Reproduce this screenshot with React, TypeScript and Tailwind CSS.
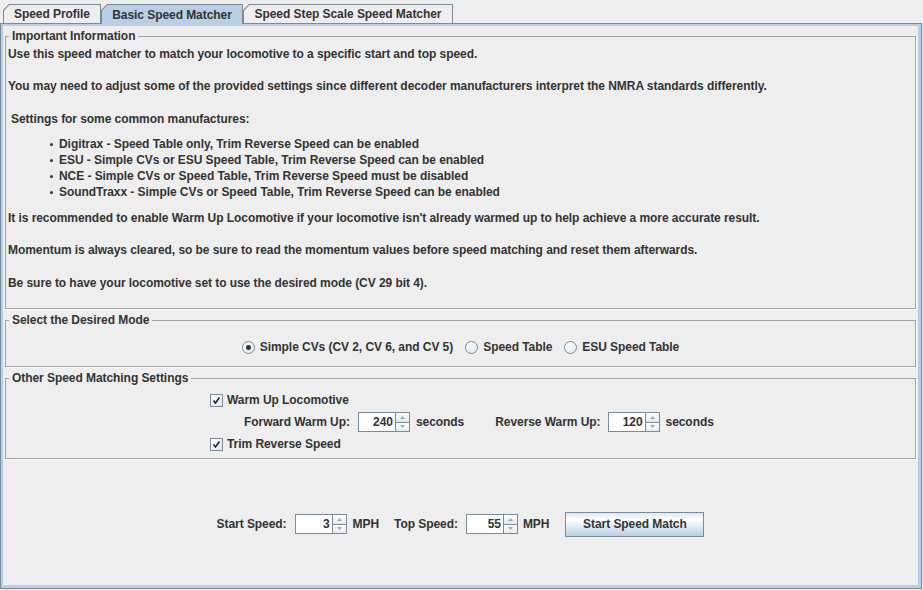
import React from 'react';

const font = "font-['Liberation_Sans',Arial,sans-serif]";

interface TabProps {
  label: string;
  width: string;
  selected?: boolean;
}

const Tab: React.FC<TabProps> = ({ label, width, selected }) => (
  <div
    className={`${width} ${
      selected ? 'h-[20px] -mb-px relative z-10' : 'h-[19px]'
    } bg-[#7a8a99] pt-px px-px [clip-path:polygon(6px_0,100%_0,100%_100%,0_100%,0_6px)]`}
  >
    <div
      className={`h-full ${
        selected ? 'bg-[#b8cfe5]' : 'bg-[#eeeeee]'
      } flex items-center justify-center leading-[14px] [clip-path:polygon(5.5px_0,100%_0,100%_100%,0_100%,0_5.5px)]`}
    >
      {label}
    </div>
  </div>
);

const TitledPanel: React.FC<{ title: string; className?: string; children?: React.ReactNode }> = ({
  title,
  className = '',
  children,
}) => (
  <fieldset
    className={`mx-[2px] border border-[#a3a3a3] shadow-[1px_1px_0_#ffffff] ${className}`}
  >
    <legend className="ml-[3px] px-[3px] leading-[14px]">{title}</legend>
    {children}
  </fieldset>
);

const Arrow: React.FC<{ up?: boolean }> = ({ up }) => (
  <svg width="5" height="3" viewBox="0 0 5 3" className="block">
    {up ? (
      <path d="M2.5 0 L5 3 L0 3 Z" fill="#a0a8b0" />
    ) : (
      <path d="M0 0 L5 0 L2.5 3 Z" fill="#a0a8b0" />
    )}
  </svg>
);

const Spinner: React.FC<{ value: string }> = ({ value }) => (
  <div className="flex h-[20px] shrink-0">
    <div className="w-[37px] h-full border border-r-0 border-[#7a8a99] bg-white text-right pr-[2px] leading-[18px] shadow-[inset_0_-1px_0_#ffffff]">
      {value}
    </div>
    <div className="w-[15px] h-full flex flex-col border border-[#7a8a99] bg-[#eeeeee]">
      <div className="flex-1 flex items-center justify-center border-b border-[#7a8a99] bg-[linear-gradient(#ffffff,#e4e8ec)]">
        <Arrow up />
      </div>
      <div className="flex-1 flex items-center justify-center bg-[linear-gradient(#ffffff,#e4e8ec)]">
        <Arrow />
      </div>
    </div>
  </div>
);

const CheckBox: React.FC<{ label: string }> = ({ label }) => (
  <div className="flex items-center h-[16px]">
    <div className="w-[13px] h-[13px] border border-[#7a8a99] bg-[linear-gradient(135deg,#ffffff,#dde8f3)] flex items-center justify-center">
      <svg width="9" height="9" viewBox="0 0 9 9">
        <path d="M1.5 4.5 L3.5 7 L7.5 1.5" stroke="#222" strokeWidth="1.6" fill="none" />
      </svg>
    </div>
    <span className="ml-[4px]">{label}</span>
  </div>
);

const Radio: React.FC<{ label: string; checked?: boolean }> = ({ label, checked }) => (
  <div className="flex items-center h-[16px]">
    <div className="w-[13px] h-[13px] rounded-full border border-[#7a8a99] bg-[linear-gradient(135deg,#ffffff,#dde8f3)] flex items-center justify-center">
      {checked && <div className="w-[5px] h-[5px] rounded-full bg-[#333333]" />}
    </div>
    <span className="ml-[5px]">{label}</span>
  </div>
);

const bullets = [
  'Digitrax - Speed Table only, Trim Reverse Speed can be enabled',
  'ESU - Simple CVs or ESU Speed Table, Trim Reverse Speed can be enabled',
  'NCE - Simple CVs or Speed Table, Trim Reverse Speed must be disabled',
  'SoundTraxx - Simple CVs or Speed Table, Trim Reverse Speed can be enabled',
];

export default function App() {
  return (
    <div
      className={`w-[923px] h-[590px] bg-[#eeeeee] text-[#333333] text-[12px] font-bold tracking-[-0.06px] ${font}`}
    >
      {/* Tabs */}
      <div className="h-[23px] flex items-end pl-[3px]">
        <Tab label="Speed Profile" width="w-[98px]" />
        <Tab label="Basic Speed Matcher" width="w-[142px]" selected />
        <Tab label="Speed Step Scale Speed Matcher" width="w-[210px]" />
      </div>

      {/* Tab content */}
      <div className="w-[922px] h-[566px] border border-[#7a8a99]">
        <div className="h-full border-t-2 border-l-2 border-r-[3px] border-b-[3px] border-[#b8cfe5] flex flex-col">
          <TitledPanel title="Important Information" className="mt-[3px] h-[280px]">
            <div className="pl-[2px] leading-[16px] whitespace-nowrap">
              <div className="mt-[3px]">Use this speed matcher to match your locomotive to a specific start and top speed.</div>
              <div className="mt-[16px]">
                You may need to adjust some of the provided settings since different decoder manufacturers interpret the NMRA standards differently.
              </div>
              <div className="mt-[17px] pl-[3px]">Settings for some common manufactures:</div>
              <div className="mt-[9px]">
                {bullets.map((b) => (
                  <div key={b} className="flex items-center pl-[42px]">
                    <span className="w-[3px] h-[3px] rounded-full bg-[#333333] mr-[6px]" />
                    {b}
                  </div>
                ))}
              </div>
              <div className="mt-[10px]">
                It is recommended to enable Warm Up Locomotive if your locomotive isn't already warmed up to help achieve a more accurate result.
              </div>
              <div className="mt-[16px]">
                Momentum is always cleared, so be sure to read the momentum values before speed matching and reset them afterwards.
              </div>
              <div className="mt-[17px]">Be sure to have your locomotive set to use the desired mode (CV 29 bit 4).</div>
            </div>
          </TitledPanel>

          <TitledPanel title="Select the Desired Mode" className="mt-[4px] h-[54px]">
            <div className="mt-[12px] flex justify-center gap-[12px]">
              <Radio label="Simple CVs (CV 2, CV 6, and CV 5)" checked />
              <Radio label="Speed Table" />
              <Radio label="ESU Speed Table" />
            </div>
          </TitledPanel>

          <TitledPanel title="Other Speed Matching Settings" className="mt-[4px] h-[88px]">
            <div className="ml-[204px] flex flex-col items-start">
              <div className="mt-[7px]">
                <CheckBox label="Warm Up Locomotive" />
              </div>
              <div className="mt-[4px] pl-[34px] flex items-center h-[20px]">
                <span>Forward Warm Up:</span>
                <div className="ml-[8px]">
                  <Spinner value="240" />
                </div>
                <span className="ml-[6px]">seconds</span>
                <span className="ml-[31px]">Reverse Warm Up:</span>
                <div className="ml-[7px]">
                  <Spinner value="120" />
                </div>
                <span className="ml-[6px]">seconds</span>
              </div>
              <div className="mt-[4px]">
                <CheckBox label="Trim Reverse Speed" />
              </div>
            </div>
          </TitledPanel>

          <div className="mt-[53px] flex items-center justify-center h-[24px]">
            <span>Start Speed:</span>
            <div className="ml-[8px]">
              <Spinner value="3" />
            </div>
            <span className="ml-[6px]">MPH</span>
            <span className="ml-[15px]">Top Speed:</span>
            <div className="ml-[8px]">
              <Spinner value="55" />
            </div>
            <span className="ml-[5px]">MPH</span>
            <button className="ml-[16px] w-[139px] h-[25px] border border-[#7a8a99] bg-[linear-gradient(#dde8f3_0%,#ffffff_30%,#b8cfe5_100%)] font-bold text-[#333333]">
              Start Speed Match
            </button>
          </div>
        </div>
      </div>
    </div>
  );
}
